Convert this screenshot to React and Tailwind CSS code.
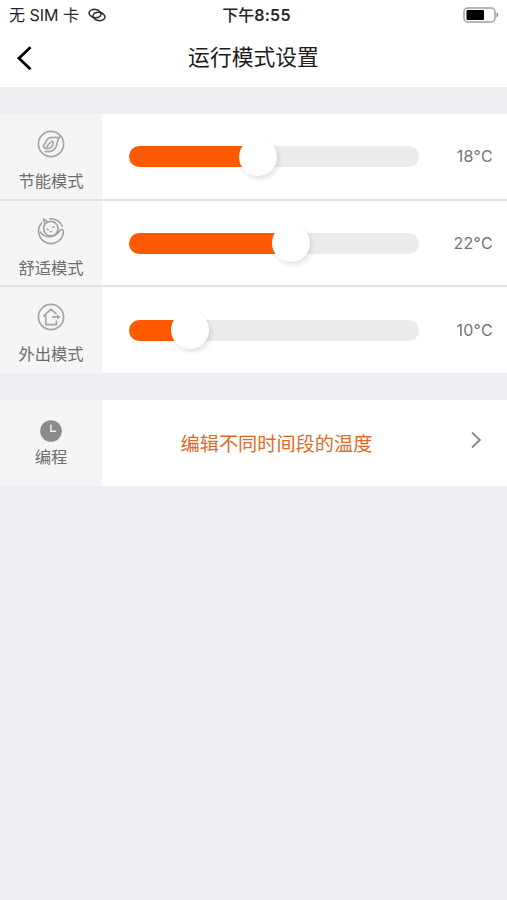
import { useState } from "react";

const MODES = [
  { id: "eco", label: "节能模式", temp: 18, offset: 128.5, Icon: EcoIcon },
  { id: "comfort", label: "舒适模式", temp: 22, offset: 162, Icon: ComfortIcon },
  { id: "away", label: "外出模式", temp: 10, offset: 61, Icon: AwayIcon },
];

function EcoIcon() {
  return (
    <svg className="h-7 w-7" viewBox="0 0 28 28" fill="none" stroke="#a6a6a6" strokeWidth="1.7" strokeLinecap="round" strokeLinejoin="round">
      <circle cx="14" cy="14" r="12.6" />
      <path d="M22.4 7.4C18.4 8 14.6 6.4 11.2 8.6C8.6 10.4 10 11.2 8.4 12.8C6.2 14.8 6 17.2 7.6 18C10.4 19 13.8 18.2 15.6 15.6C16.8 13.6 16.2 11.6 14.8 10.8" />
      <path d="M22.4 7.4C20 10 20.6 14.4 18.4 18C16.4 21 12.4 22 8.4 21.4" />
      <path d="M9.4 17.6C10.4 15.4 11.8 13.6 13.6 12.4" />
    </svg>
  );
}

function ComfortIcon() {
  return (
    <svg className="h-7 w-7" viewBox="0 0 28 28" fill="none" stroke="#a3a3a3" strokeWidth="1.6" strokeLinecap="round" strokeLinejoin="round">
      <path d="M12.8 1.8A12.4 12.4 0 0 1 25.4 9.2" />
      <path d="M4.8 5.8A12.4 12.4 0 1 0 26.4 14C26.2 12.2 24.6 12 23.2 13.2" />
      <path d="M3.4 15.2C6 18.8 9.4 20 13.6 19.6C18 19.2 20.8 16.4 23.2 13.2" />
      <circle cx="13.8" cy="11.6" r="7.2" />
      <path d="M8 7L6.6 2L10.8 4.8" />
      <path d="M10 12.2L11.4 12.8M15.6 10.4L17 9.8M13.2 14.8L14.8 14.4" strokeWidth="1.3" />
    </svg>
  );
}

function AwayIcon() {
  return (
    <svg className="h-7 w-7" viewBox="0 0 28 28" fill="none" stroke="#a6a6a6" strokeWidth="1.7" strokeLinejoin="round">
      <circle cx="14" cy="14" r="12.6" />
      <path d="M19.6 11.2L14 6.2L6.8 12.8H8.8V21.6H19.4V17.4" />
      <path d="M15 14H22" />
      <path d="M20 11.6L23.4 14L20 16.4Z" fill="#a3a3a3" stroke="none" />
    </svg>
  );
}

function ClockIcon() {
  return (
    <svg className="h-[22px] w-[22px]" viewBox="0 0 22 22" fill="none">
      <circle cx="11" cy="11" r="10.8" fill="#8b8b8b" />
      <path d="M10.9 4.4V11.3H16" stroke="#f0f0f0" strokeWidth="1.5" />
    </svg>
  );
}

function StatusBar() {
  return (
    <div className="grid h-[30px] grid-cols-3 items-center pr-2 pl-[9px] text-[#262626]">
      <div className="flex items-center text-[16px] leading-[30px] whitespace-nowrap">
        <span>无 SIM 卡</span>
        <svg className="ml-[9px] h-[14px] w-[18px]" viewBox="0 0 18 14" fill="none" stroke="#333" strokeWidth="1.6">
          <ellipse cx="7" cy="5.6" rx="6" ry="4.1" transform="rotate(12 7 5.6)" />
          <ellipse cx="11" cy="8.4" rx="6" ry="4.1" transform="rotate(12 11 8.4)" />
        </svg>
      </div>
      <div className="pl-[5px] text-center text-[16px] leading-[30px] font-semibold whitespace-nowrap">
        <span className="font-medium">下午</span>
        <span className="tracking-[0.3px]">8:55</span>
      </div>
      <svg className="h-4 w-9 justify-self-end" viewBox="0 0 36 16" fill="none">
        <rect x="1" y="1" width="31" height="14" rx="4" stroke="#a0a0a0" strokeWidth="1.5" />
        <rect x="3.5" y="3" width="17.5" height="10" rx="1" fill="#000" />
        <path d="M33.5 5.5C35.8 6.3 35.8 9.7 33.5 10.5Z" fill="#8a8a8a" />
      </svg>
    </div>
  );
}

function Slider({ offset }) {
  return (
    <div className="relative h-[21px] w-[290px] shrink-0 rounded-full bg-[#ebebeb]">
      <div className="h-full rounded-l-full bg-[#ff5a00]" style={{ width: offset }} />
      <div
        className="absolute -top-[8.5px] h-[38px] w-[38px] -translate-x-1/2 rounded-full bg-white shadow-[2px_3px_5px_rgba(0,0,0,0.11)]"
        style={{ left: offset }}
      />
    </div>
  );
}

function ModeRow({ mode }) {
  const { Icon, label, temp, offset } = mode;

  return (
    <div className="flex h-[84px] bg-white first:h-[85px] last:h-[86px]">
      <div className="flex w-[102px] shrink-0 flex-col items-center bg-[#f5f5f5] pt-4">
        <Icon />
        <span className="mt-[11px] text-[16.3px] leading-6 text-[#6e6e6e]">{label}</span>
      </div>
      <div className="flex flex-1 items-center justify-between pr-[14px] pl-[27px]">
        <Slider offset={offset} />
        <span className="font-[Inter] text-[16px] leading-[23px] tracking-[0.3px] text-[#747474]">{temp}°C</span>
      </div>
    </div>
  );
}

export default function App() {
  const [modes] = useState(MODES);

  return (
    <div className="min-h-screen w-full bg-[#edeef2] font-[Inter,'Noto_Sans_CJK_SC',sans-serif]">
      <header className="h-[87px] bg-white">
        <StatusBar />
        <div className="grid h-[55px] grid-cols-[60px_1fr_60px] items-center">
          <svg className="ml-4 h-6 w-4" viewBox="0 0 16 24" fill="none" stroke="#000" strokeWidth="2.8">
            <path d="M14.5 1.2L3 12.3L14.5 23.2" />
          </svg>
          <h1 className="text-center text-[21.8px] text-[#1c1c1c]">运行模式设置</h1>
        </div>
      </header>

      <section className="mt-[27px] flex flex-col gap-[2px] bg-[#e2e2e2]">
        {modes.map((mode) => (
          <ModeRow key={mode.id} mode={mode} />
        ))}
      </section>

      <section className="mt-[27px] flex h-[86px] bg-white">
        <div className="flex w-[102px] shrink-0 flex-col items-center bg-[#f5f5f5] pt-5">
          <ClockIcon />
          <span className="mt-[3px] text-[16.3px] leading-6 text-[#6e6e6e]">编程</span>
        </div>
        <div className="flex flex-1 items-center pr-[25px]">
          <span className="flex-1 pt-[2px] pr-[19px] text-center text-[19.2px] text-[#e06a26]">编辑不同时间段的温度</span>
          <svg className="mb-1.5 h-[18px] w-3" viewBox="0 0 12 18" fill="none" stroke="#8c8c8c" strokeWidth="2">
            <path d="M2 1.5L9.8 9L2 16.5" />
          </svg>
        </div>
      </section>
    </div>
  );
}
